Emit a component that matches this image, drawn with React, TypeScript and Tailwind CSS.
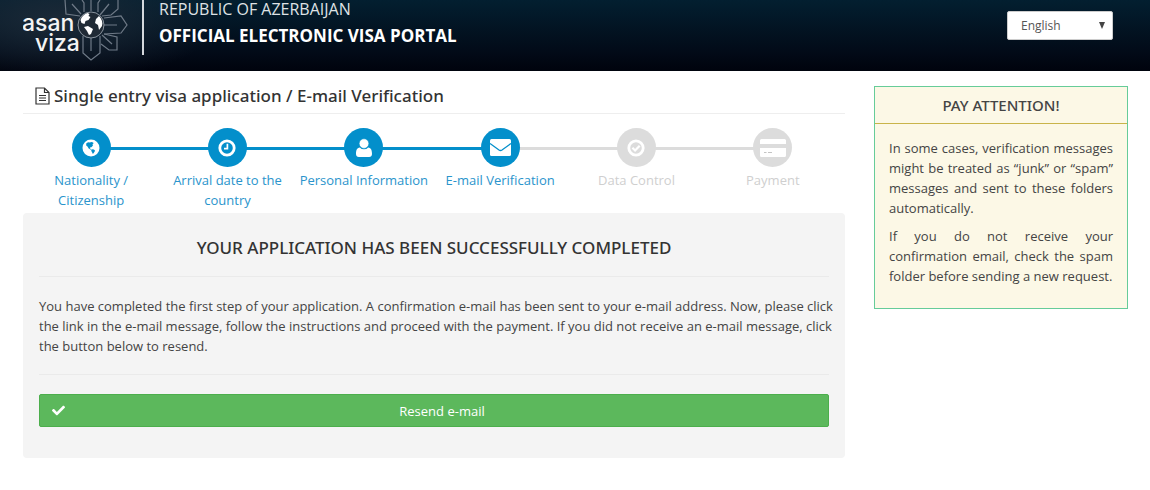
import { FaCheck } from 'react-icons/fa';
import type { ReactNode } from 'react';

type Step = {
  label: string;
  done: boolean;
  icon: ReactNode;
};

const steps: Step[] = [
  {
    label: 'Nationality / Citizenship',
    done: true,
    icon: (
      <svg viewBox="0 0 18 18" className="h-[18px] w-[18px]">
        <circle cx="9" cy="9" r="8.5" fill="#fff" />
        <path
          d="M4.2 4.6 6 3.2l2 .4 1.2-.6 2 .6.2 1.2-1 .8.6 1-1.6 1.6-1.4.2-.2 1 1.3.6-.4.8-2-1.2-1.2-2-1.3-1.2z M9.5 10.2l2.4.4 1.2 1.2-1.2 2-1 1.2-.9-1.8-.8-1.4z"
          fill="#038fcb"
        />
      </svg>
    ),
  },
  {
    label: 'Arrival date to the country',
    done: true,
    icon: (
      <svg viewBox="0 0 18 18" className="h-[18px] w-[18px]" fill="none" stroke="#fff">
        <circle cx="9" cy="9" r="7.2" strokeWidth="2.8" />
        <path d="M9.4 4.8v4.8H6" strokeWidth="1.7" />
      </svg>
    ),
  },
  {
    label: 'Personal Information',
    done: true,
    icon: (
      <svg viewBox="0 0 18 20" className="h-5 w-[18px]">
        <path
          d="M1 16c0-3.4.8-6.4 3.8-6.6a5.6 5.6 0 0 0 8.4 0c3 .2 3.8 3.2 3.8 6.6 0 2-1.2 3-2.8 3H3.8C2.2 19 1 18 1 16z"
          fill="#fff"
        />
        <circle cx="9" cy="5.6" r="4.8" fill="#fff" stroke="#038fcb" strokeWidth="0.5" />
      </svg>
    ),
  },
  {
    label: 'E-mail Verification',
    done: true,
    icon: (
      <svg viewBox="0 0 21 17" className="h-[17px] w-[21px]">
        <rect width="21" height="17" rx="1.5" fill="#fff" />
        <path d="M0 4.5 9 11q1.5 1 3 0l9-6.5" fill="none" stroke="#038fcb" strokeWidth="1.3" />
      </svg>
    ),
  },
  {
    label: 'Data Control',
    done: false,
    icon: (
      <svg viewBox="0 0 18 18" className="h-[18px] w-[18px]" fill="none" stroke="#fff">
        <circle cx="9" cy="9" r="7.2" strokeWidth="2.8" />
        <path d="m5.4 8.8 2.7 2.7 4.6-4.8" strokeWidth="2.2" />
      </svg>
    ),
  },
  {
    label: 'Payment',
    done: false,
    icon: (
      <svg viewBox="0 0 26 18" className="h-[18px] w-[26px]">
        <path
          d="M1.5 0h23A1.5 1.5 0 0 1 26 1.5V5H0V1.5A1.5 1.5 0 0 1 1.5 0z M0 9h26v7.5a1.5 1.5 0 0 1-1.5 1.5h-23A1.5 1.5 0 0 1 0 16.5z"
          fill="#fff"
        />
        <path d="M4 13h2.5v1H4z M8 13h4v1H8z" fill="#c4c4c4" />
      </svg>
    ),
  },
];

const message = [
  'You have completed the first step of your application. A confirmation e-mail has been sent to your e-mail address. Now, please click',
  'the link in the e-mail message, follow the instructions and proceed with the payment. If you did not receive an e-mail message, click',
  'the button below to resend.',
];

function Logo() {
  return (
    <svg
      viewBox="0 0 112 64"
      className="h-16 w-28 shrink-0 font-['Inter']"
      role="img"
      aria-label="asan viza"
    >
      <g fill="none" stroke="#6f7a87" strokeWidth="1.2">
        <path d="M57 16 43 14 42 0M58 14 49 4" />
        <path d="M61 12V3l-2-3M75 12V3l2-3M68 11V0" />
        <path d="M79 16 88 15 95 9V0M77 15 86 4" />
        <path d="M81 18 98 16l6 9-6 8-17 1M81 25h13" />
        <path d="M81 34 94 37v13h-8l-8-6M79 35l10 9" />
        <path d="M60 36v17l8 7 9-7V36M68 38v13" />
      </g>
      <circle cx="68" cy="25" r="13" fill="#202a35" stroke="#8b949e" strokeWidth="1" />
      <path
        d="M57.5 20c1.5-4 4-6 7-7l2 1-1 2 2 1-2 3-3 1-1 3-3-1zM61 27l4-1 5 3-2 5-2 1-2-4zM73 19l3-3c3 3 4 7 3 10l-3 4-1-5-3-2z"
        fill="#fff"
      />
      <text fill="#f4f4f4" className="text-[23px] font-medium">
        <tspan x="-1" y="31">
          asan
        </tspan>
        <tspan x="12" y="51">
          viza
        </tspan>
      </text>
    </svg>
  );
}

function FileIcon() {
  return (
    <svg
      viewBox="0 0 15 18"
      className="h-[18px] w-[15px] shrink-0"
      fill="none"
      stroke="#333"
      strokeWidth="1.2"
      aria-hidden="true"
    >
      <path d="M1 1h8.5L14 5.5V17H1zM9.5 1v4.5H14" />
      <path d="M4 8.5h7M4 11h7M4 13.5h7" />
    </svg>
  );
}

export default function App() {
  return (
    <div className="font-['Open_Sans','Noto_Sans',sans-serif] text-[13px] leading-5 text-[#444]">
      <header className="flex h-[71px] items-start justify-between bg-[radial-gradient(ellipse_160px_60px_at_60px_20px,#1c2a38,transparent),linear-gradient(to_bottom,#031f30,#020a17_75%,#00030d)] pr-[37px] pl-[23px] text-white">
        <div className="flex items-start">
          <Logo />
          <div className="ml-[7px] h-[55px] w-[2px] bg-[#d5d8dc]" />
          <div className="ml-[15px]">
            <p className="text-base leading-[18px] text-[#dfe2e5]">REPUBLIC OF AZERBAIJAN</p>
            <h1 className="mt-2 text-[17px] leading-5 font-bold">
              OFFICIAL ELECTRONIC VISA PORTAL
            </h1>
          </div>
        </div>
        <div className="relative mt-[11px]">
          <select
            aria-label="Language"
            className="h-[29px] w-[106px] appearance-none rounded-xs border border-[#ccc] bg-white pl-[13px] text-xs text-[#555]"
          >
            <option>English</option>
          </select>
          <span className="pointer-events-none absolute top-[11px] right-2 border-x-[3px] border-t-[7px] border-x-transparent border-t-[#444]" />
        </div>
      </header>

      <div className="flex items-start gap-[29px] pr-[22px] pl-[23px]">
        <main className="min-w-0 flex-1">
          <h2 className="flex h-[43px] items-center gap-1 border-b border-[#eee] pt-2 pl-3 font-['Noto_Sans',sans-serif] text-[17px] font-medium text-[#333]">
            <FileIcon />
            Single entry visa application / E-mail Verification
          </h2>

          <ol className="mr-1 flex h-[99px] pt-[14px]">
            {steps.map((step, i) => (
              <li key={step.label} className="relative flex flex-1 flex-col items-center">
                {i > 0 && (
                  <span
                    className={`absolute top-[19px] right-1/2 h-[3px] w-1/2 ${step.done ? 'bg-[#038fcb]' : 'bg-[#dcdcdc]'}`}
                  />
                )}
                {i < steps.length - 1 && (
                  <span
                    className={`absolute top-[19px] left-1/2 h-[3px] w-1/2 ${steps[i + 1].done ? 'bg-[#038fcb]' : 'bg-[#dcdcdc]'}`}
                  />
                )}
                <span
                  className={`relative flex h-[39px] w-[39px] items-center justify-center rounded-full ${step.done ? 'bg-[#038fcb]' : 'bg-[#dcdcdc]'}`}
                >
                  {step.icon}
                </span>
                <span
                  className={`mt-[3px] text-center ${step.done ? 'text-[#2a94cc]' : 'text-[#cfcfcf]'}`}
                >
                  {step.label}
                </span>
              </li>
            ))}
          </ol>

          <section className="rounded-sm bg-[#f4f4f4] px-4 pb-[31px]">
            <h3 className="border-b border-[#eaeaea] pt-6 pb-[18px] text-center font-['Noto_Sans',sans-serif] text-[17px] leading-[21px] font-medium text-[#333]">
              YOUR APPLICATION HAS BEEN SUCCESSFULLY COMPLETED
            </h3>
            <p className="border-b border-[#eaeaea] pt-[19px] pb-[18px]">
              {message.map((line) => (
                <span
                  key={line}
                  className="block text-justify [text-align-last:justify] last:[text-align-last:left] lg:whitespace-nowrap"
                >
                  {line}{' '}
                </span>
              ))}
            </p>
            <button
              type="button"
              className="relative mt-[19px] h-[33px] w-full rounded-xs border border-[#4cae4c] bg-[#5cb85c] pl-4 text-white"
            >
              <FaCheck className="absolute top-[9px] left-3 h-[13px] w-[13px]" />
              Resend e-mail
            </button>
          </section>
        </main>

        <aside className="mt-[15px] w-[254px] border border-[#6c9] bg-[#fcf8e6]">
          <h3 className="border-b border-[#c9b44a] py-2 text-center font-['Noto_Sans',sans-serif] text-[15px] font-medium">
            PAY ATTENTION!
          </h3>
          <div className="space-y-2 px-[14px] pt-[14px] pb-[22px] text-justify">
            <p>
              In some cases, verification messages might be treated as “junk” or “spam” messages
              and sent to these folders automatically.
            </p>
            <p>
              If you do not receive your confirmation email, check the spam folder before sending a
              new request.
            </p>
          </div>
        </aside>
      </div>
    </div>
  );
}
